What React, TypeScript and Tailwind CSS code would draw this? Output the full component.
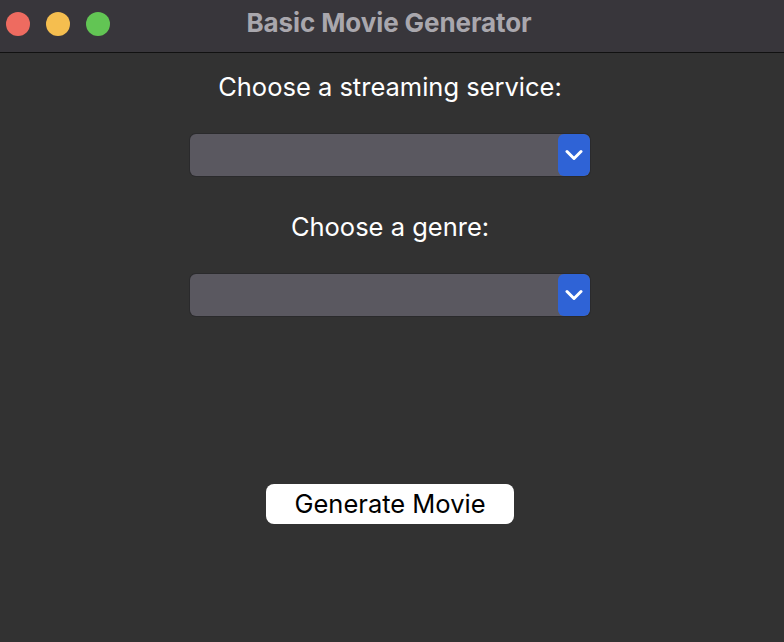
function Dropdown() {
  return (
    <div className="w-[402px] h-[44px] p-px rounded-[7px] bg-[#2a2a2c] flex">
      <div className="flex-1 flex rounded-[6px] bg-[#5a5860] overflow-hidden">
        <div className="flex-1" />
        <div className="w-[32px] bg-[#2f63d6] rounded-[6px] flex items-center justify-center">
          <svg width="18" height="12" viewBox="0 0 18 12" fill="none">
            <polyline
              points="2,2.5 9,9.5 16,2.5"
              stroke="white"
              strokeWidth="3"
              strokeLinecap="round"
              strokeLinejoin="round"
            />
          </svg>
        </div>
      </div>
    </div>
  );
}

export default function App() {
  return (
    <div
      className="w-[784px] h-[642px] bg-[#323232] flex flex-col overflow-hidden"
      style={{ fontFamily: 'Inter, "Liberation Sans", Arial, sans-serif' }}
    >
      {/* Title bar */}
      <div className="h-[53px] shrink-0 bg-[#38363b] border-b border-[#111] relative flex items-center justify-center">
        <div className="absolute left-[6px] top-[12px] flex gap-[16px]">
          <span className="w-[24px] h-[24px] rounded-full bg-[#ee6b60]" />
          <span className="w-[24px] h-[24px] rounded-full bg-[#f5be4f]" />
          <span className="w-[24px] h-[24px] rounded-full bg-[#62c554]" />
        </div>
        <h1 className="text-[26px] leading-[30px] font-bold text-[#a9a7ad] -mt-[6px] ml-[-6px] tracking-[-0.1px]">
          Basic Movie Generator
        </h1>
      </div>

      {/* Content */}
      <div className="flex flex-col items-center pt-[19px] pr-[4px]">
        <p className="text-[25.5px] leading-[30px] text-white">Choose a streaming service:</p>
        <div className="mt-[31px]">
          <Dropdown />
        </div>
        <p className="mt-[35px] text-[25.5px] leading-[30px] text-white">Choose a genre:</p>
        <div className="mt-[31px]">
          <Dropdown />
        </div>
        <button className="mt-[167px] w-[248px] h-[40px] bg-white rounded-[8px] text-black text-[25.5px] leading-[30px]">
          Generate Movie
        </button>
      </div>
    </div>
  );
}
